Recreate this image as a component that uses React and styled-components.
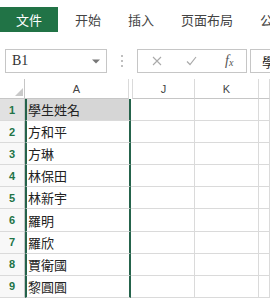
import styled, { createGlobalStyle } from "styled-components";

const GlobalStyle = createGlobalStyle`
  body {
    margin: 0;
    background: #fff;
  }
`;

const GREEN = "#217346";
const SEL = "#25634b";
const GRID = "#dadada";
const HEAD_LINE = "#c6c6c6";
const CJK_SC = `"Noto Sans CJK SC", "Noto Sans", sans-serif`;
const CJK_TC = `"Noto Sans CJK TC", "Noto Sans", sans-serif`;

const Page = styled.div`
  width: 270px;
  height: 301px;
  overflow: hidden;
  background: #fff;
  display: flex;
  flex-direction: column;
`;

const TabBar = styled.div`
  height: 32px;
  padding-top: 7px;
  box-sizing: border-box;
  display: flex;
  align-items: stretch;
  white-space: nowrap;
`;

const FileTab = styled.div`
  width: 58px;
  flex: none;
  background: ${GREEN};
  color: #fff;
  font: 13px ${CJK_SC};
  display: flex;
  align-items: center;
  justify-content: center;
`;

const TabList = styled.div`
  display: flex;
  align-items: center;
  gap: 27px;
  padding-left: 17px;
`;

const Tab = styled.span`
  font: 13px ${CJK_SC};
  color: #444;
`;

const FormulaRow = styled.div`
  margin-top: 17px;
  height: 24px;
  display: flex;
  align-items: stretch;
  padding-left: 5px;
`;

const NameBox = styled.div`
  width: 102px;
  flex: none;
  box-sizing: border-box;
  border: 1px solid ${HEAD_LINE};
  display: flex;
  align-items: center;
  justify-content: space-between;
  padding: 0 6px 0 6px;
`;

const NameText = styled.span`
  font: 14px "Liberation Serif", serif;
  color: #333;
`;

const Dots = styled.div`
  width: 30px;
  flex: none;
  display: flex;
  flex-direction: column;
  align-items: center;
  justify-content: center;
  gap: 3px;

  span {
    width: 2px;
    height: 2px;
    border-radius: 1px;
    background: #aaa;
  }
`;

const FormulaBox = styled.div`
  width: 110px;
  flex: none;
  box-sizing: border-box;
  border: 1px solid ${HEAD_LINE};
  display: flex;
  align-items: center;
  padding-left: 14px;
`;

const Fx = styled.span`
  margin-left: 28px;
  font: italic 14px "Liberation Serif", serif;
  color: #555;

  sub {
    font-size: 10px;
    vertical-align: baseline;
    position: relative;
    top: 1px;
  }
`;

const ContentBox = styled.div`
  margin-left: 3px;
  flex: 1;
  border: 1px solid ${HEAD_LINE};
  border-right: none;
  display: flex;
  align-items: center;
  padding-left: 11px;
  font: 13px ${CJK_TC};
  color: #222;
  white-space: nowrap;
  overflow: hidden;
`;

const Sheet = styled.div`
  margin-top: 6px;
  display: grid;
  grid-template-columns: 25px 106px 64px 64px 1fr;
  grid-template-rows: 20px repeat(9, 22.1px);
`;

const Corner = styled.div`
  box-sizing: border-box;
  border-right: 1px solid ${HEAD_LINE};
  border-bottom: 1px solid ${HEAD_LINE};
  display: flex;
  align-items: flex-end;
  justify-content: flex-end;
  padding: 0 1px 2px 0;
`;

const ColHead = styled.div`
  box-sizing: border-box;
  border-bottom: 1px solid ${HEAD_LINE};
  border-right: 1px solid ${GRID};
  margin-right: ${(p) => (p.$gapRight ? "2px" : "0")};
  border-left: ${(p) => (p.$gapLeft ? `1px solid ${GRID}` : "none")};
  margin-left: ${(p) => (p.$gapLeft ? "1px" : "0")};
  display: flex;
  align-items: center;
  justify-content: center;
  font: 11px "Liberation Sans", Arial, sans-serif;
  color: #444;
`;

const RowHead = styled.div`
  box-sizing: border-box;
  border-right: 1px solid ${HEAD_LINE};
  border-bottom: 1px solid ${GRID};
  background: ${(p) => (p.$active ? "#e1e1e1" : "#f8f8f8")};
  display: flex;
  align-items: center;
  justify-content: center;
  font: bold 11px "Liberation Sans", Arial, sans-serif;
  color: ${GREEN};
`;

const Cell = styled.div`
  box-sizing: border-box;
  border-bottom: 1px solid ${GRID};
  border-right: 1px solid ${GRID};
  background: ${(p) => (p.$shade ? "#d6d6d6" : "#fff")};
  display: flex;
  align-items: center;
  font: 13px ${CJK_TC};
  color: #222;
  white-space: nowrap;
  overflow: hidden;
`;

const SelCell = styled(Cell)`
  border-left: 2px solid ${SEL};
  border-right: 2px solid ${SEL};
  padding-left: 1px;
`;

const names = [
  "學生姓名",
  "方和平",
  "方琳",
  "林保田",
  "林新宇",
  "羅明",
  "羅欣",
  "賈衛國",
  "黎圓圓",
];

const Arrow = () => (
  <svg width="8" height="5" viewBox="0 0 8 5">
    <path d="M0 0.5h8L4 4.5z" fill="#777" />
  </svg>
);

const Cross = () => (
  <svg width="10" height="10" viewBox="0 0 10 10">
    <path d="M1 1l8 8M9 1l-8 8" stroke="#aaa" strokeWidth="1.1" />
  </svg>
);

const Check = () => (
  <svg width="11" height="10" viewBox="0 0 11 10" style={{ marginLeft: 24 }}>
    <path d="M1 5.5l3 3 6-7.5" stroke="#aaa" strokeWidth="1.2" fill="none" />
  </svg>
);

const Triangle = () => (
  <svg width="8" height="8" viewBox="0 0 8 8">
    <path d="M8 0v8H0z" fill="#c9c9c9" />
  </svg>
);

export default function App() {
  return (
    <Page>
      <GlobalStyle />
      <TabBar>
        <FileTab>文件</FileTab>
        <TabList>
          <Tab>开始</Tab>
          <Tab>插入</Tab>
          <Tab>页面布局</Tab>
          <Tab>公式</Tab>
        </TabList>
      </TabBar>

      <FormulaRow>
        <NameBox>
          <NameText>B1</NameText>
          <Arrow />
        </NameBox>
        <Dots>
          <span />
          <span />
          <span />
        </Dots>
        <FormulaBox>
          <Cross />
          <Check />
          <Fx>
            f<sub>x</sub>
          </Fx>
        </FormulaBox>
        <ContentBox>學生姓名</ContentBox>
      </FormulaRow>

      <Sheet>
        <Corner>
          <Triangle />
        </Corner>
        <ColHead $gapRight>A</ColHead>
        <ColHead $gapLeft>J</ColHead>
        <ColHead>K</ColHead>
        <ColHead />
        {names.map((name, i) => (
          <Row key={i} n={i + 1} name={name} />
        ))}
      </Sheet>
    </Page>
  );
}

function Row({ n, name }) {
  return (
    <>
      <RowHead $active={n === 1}>{n}</RowHead>
      <SelCell $shade={n === 1}>{name}</SelCell>
      <Cell />
      <Cell />
      <Cell />
    </>
  );
}
